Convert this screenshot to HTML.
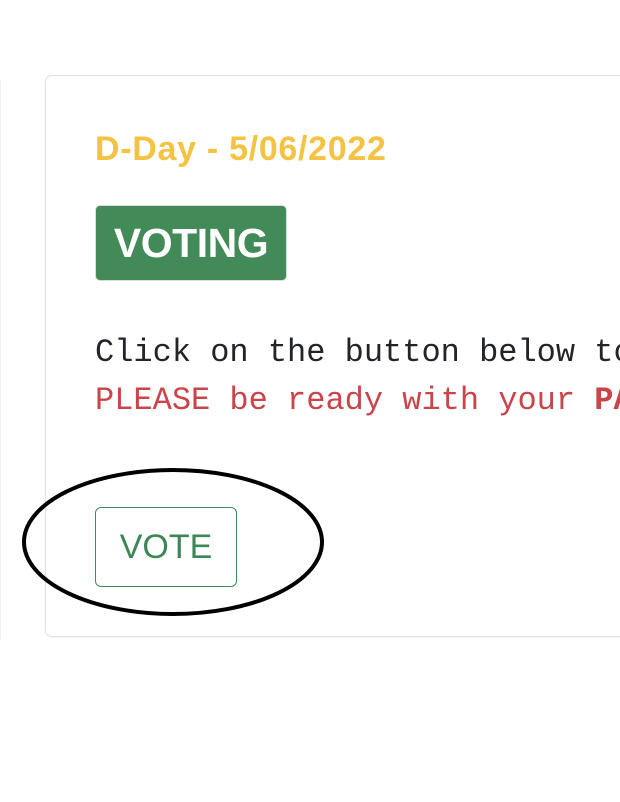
<!DOCTYPE html>
<html><head><style>
body{margin:0;width:620px;height:802px;background:#fff;overflow:hidden;position:relative;font-family:"Liberation Sans",sans-serif}
.card{position:absolute;left:45px;top:75px;width:640px;height:560px;border:1.5px solid #dfe1e4;border-radius:7px;box-shadow:0 1px 2px rgba(0,0,0,.05)}
.t{position:absolute;left:95px;top:130px;font-size:34px;font-weight:bold;color:#f4c343;line-height:38px;white-space:nowrap;letter-spacing:0.7px}
.badge{position:absolute;left:95px;top:205px;width:190px;height:74px;background:#428a57;border:1.5px solid #d9dde2;border-radius:5px;color:#fff;font-weight:bold;font-size:41px;line-height:74px;text-align:center;letter-spacing:-0.5px}
.m{position:absolute;left:95px;font-family:"Liberation Mono",monospace;font-size:32px;white-space:nowrap;line-height:40px}
.btn{position:absolute;left:95px;top:507px;width:140px;height:78px;border:1.5px solid #428a57;border-radius:6px;color:#3d8756;font-size:34px;line-height:78px;text-align:center}
</style></head><body>
<div style="position:absolute;left:0;top:80px;width:1px;height:560px;background:#eee"></div>
<div class="card"></div>
<div class="t">D-Day - 5/06/2022</div>
<div class="badge">VOTING</div>
<div class="m" style="top:333px;color:#212529">Click on the button below to</div>
<div class="m" style="top:381px;color:#cb444a">PLEASE be ready with your <b>PA</b></div>
<div class="btn">VOTE</div>
<svg style="position:absolute;left:0;top:0" width="620" height="802"><ellipse cx="173" cy="542" rx="149" ry="72" fill="none" stroke="#000" stroke-width="4"/></svg>
</body></html>
